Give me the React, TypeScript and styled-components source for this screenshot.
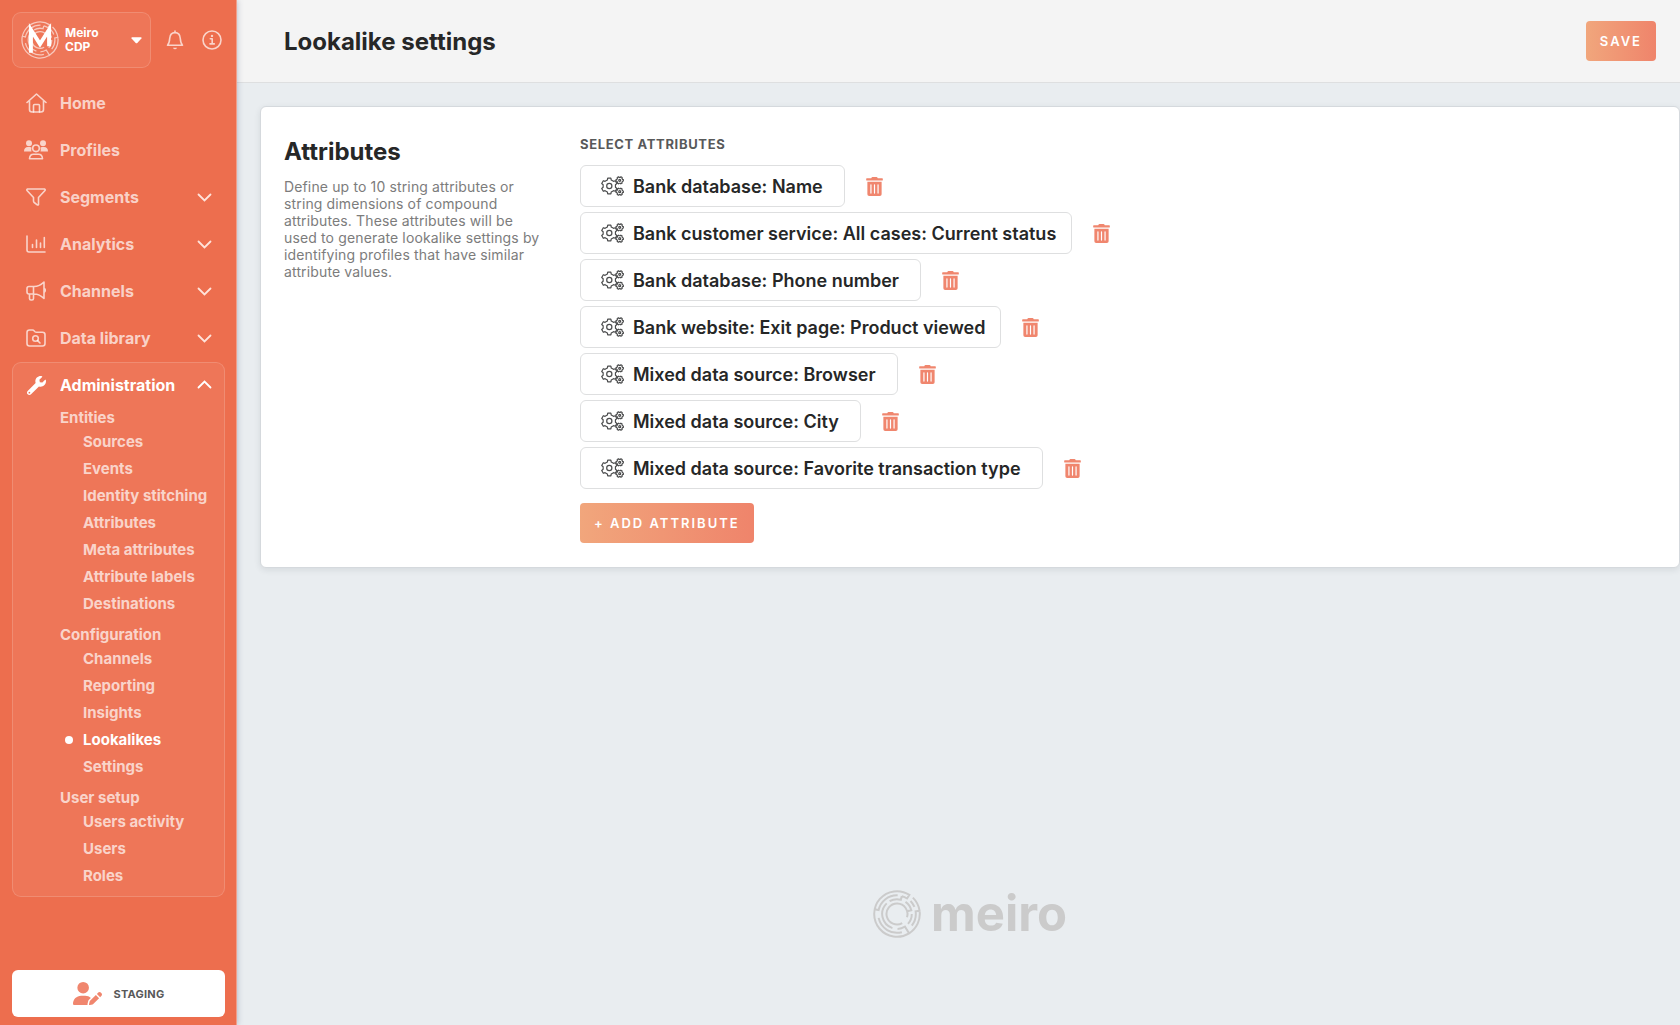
import React from "react";
import styled, { createGlobalStyle } from "styled-components";
import { FaTrashAlt, FaWrench } from "react-icons/fa";
import { FaUserPen } from "react-icons/fa6";

const color = {
  coral: "#ed6e4e",
  salmon: "#f0866e",
  peach: "#f1a67c",
  ink: "#262727",
  text: "#58595a",
  muted: "#7c7c7c",
  line: "#dedfe0",
  page: "#e9edf0",
  navText: "rgba(255, 255, 255, 0.7)",
  panel: "rgba(255, 255, 255, 0.06)",
  panelLine: "rgba(255, 255, 255, 0.16)",
};

const GlobalStyle = createGlobalStyle`
  *, *::before, *::after { box-sizing: border-box; }
  body {
    margin: 0;
    background: ${color.page};
    color: ${color.ink};
    font-family: Inter, "Liberation Sans", sans-serif;
    font-size: 16px;
  }
  h1, h2, h3, p, ul { margin: 0; padding: 0; }
  ul { list-style: none; }
  button { font-family: inherit; cursor: pointer; border: 0; background: none; padding: 0; }
  a { color: inherit; text-decoration: none; }
`;

const Shell = styled.div`
  display: grid;
  grid-template-columns: 237px minmax(0, 1fr);
  min-height: 100vh;
`;

/* ---------- sidebar ---------- */

const Sidebar = styled.aside`
  display: flex;
  flex-direction: column;
  padding: 12px 11px 8px 12px;
  background: ${color.coral};
  border-right: 1px solid #f0a08c;
  box-shadow: 0 0 6px rgba(60, 70, 110, 0.35);
  z-index: 1;
`;

const TopBar = styled.div`
  display: flex;
  align-items: center;
  padding-right: 3px;
`;

const Workspace = styled.button`
  display: flex;
  align-items: center;
  gap: 6px;
  width: 139px;
  height: 56px;
  padding: 0 8px;
  background: ${color.panel};
  border: 1px solid ${color.panelLine};
  border-radius: 9px;
  color: #fff;
`;

const WorkspaceName = styled.span`
  flex: 1;
  font-size: 12px;
  font-weight: 700;
  line-height: 14px;
  text-align: left;
`;

const TopActions = styled.div`
  display: flex;
  flex: 1;
  justify-content: space-between;
  padding-left: 15px;
`;

const IconButton = styled.button`
  display: flex;
  align-items: center;
  color: ${color.navText};
`;

const Nav = styled.nav`
  display: flex;
  flex-direction: column;
  padding-top: 11px;
`;

const NavItem = styled.a<{ $active?: boolean }>`
  display: flex;
  align-items: center;
  height: ${(p) => (p.$active ? 44 : 47)}px;
  padding: 0 13px 0 12px;
  color: ${(p) => (p.$active ? "#fff" : color.navText)};
  font-weight: 700;
`;

const NavIcon = styled.span`
  display: flex;
  justify-content: center;
  width: 24px;
  margin-right: 12px;
`;

const NavLabel = styled.span`
  flex: 1;
`;

const OpenSection = styled.section`
  border: 1px solid ${color.panelLine};
  border-radius: 9px;
  background: ${color.panel};
  margin-top: 1px;

  ${NavItem} {
    padding: 0 12px 0 11px;
  }
`;

const Group = styled.div`
  padding: 1px 8px 7px 47px;
`;

const GroupTitle = styled.h3`
  color: ${color.navText};
  font-size: 15px;
  font-weight: 700;
  line-height: 20px;
`;

const SubLink = styled.a<{ $active?: boolean }>`
  display: flex;
  align-items: center;
  height: 27px;
  color: ${(p) => (p.$active ? "#fff" : color.navText)};
  font-size: 15px;
  font-weight: 700;
  white-space: nowrap;

  &::before {
    content: "";
    width: 8px;
    height: 8px;
    margin: 0 10px 0 5px;
    border-radius: 50%;
    background: ${(p) => (p.$active ? "#fff" : "transparent")};
  }
`;

const Staging = styled.button`
  display: flex;
  align-items: center;
  justify-content: center;
  gap: 12px;
  height: 47px;
  margin-top: auto;
  border-radius: 6px;
  background: #fff;
  color: ${color.text};
  font-size: 11px;
  font-weight: 700;
  letter-spacing: 0.02em;

  svg {
    color: ${color.salmon};
  }
`;

/* ---------- main ---------- */

const Main = styled.main`
  display: flex;
  flex-direction: column;
`;

const Header = styled.header`
  display: flex;
  align-items: center;
  justify-content: space-between;
  height: 83px;
  padding: 0 24px 0 47px;
  background: #f4f4f4;
  border-bottom: 1px solid ${color.line};
`;

const Title = styled.h1`
  padding-top: 2px;
  font-size: 24px;
  font-weight: 700;
  line-height: 30px;
`;

const PrimaryButton = styled.button`
  height: 40px;
  padding: 0 14px;
  border-radius: 4px;
  background: linear-gradient(90deg, ${color.peach}, #ef846b);
  color: #fff;
  font-size: 13px;
  font-weight: 600;
  letter-spacing: 2px;
`;

const Content = styled.div`
  display: flex;
  flex: 1;
  flex-direction: column;
  padding: 23px 0 87px 23px;
`;

const Card = styled.section`
  display: grid;
  grid-template-columns: 264px minmax(0, 1fr);
  column-gap: 32px;
  padding: 28px 23px 24px;
  background: #fff;
  border: 1px solid #d5d9dd;
  border-radius: 6px;
  box-shadow: 0 2px 6px rgba(40, 50, 60, 0.1);
`;

const CardTitle = styled.h2`
  padding-top: 1px;
  font-size: 24px;
  font-weight: 700;
  line-height: 32px;
`;

const Description = styled.p`
  padding-top: 10px;
  color: ${color.muted};
  font-size: 14px;
  letter-spacing: 0.01em;
  line-height: 17px;
`;

const FieldTitle = styled.h3`
  color: ${color.text};
  font-size: 13px;
  font-weight: 700;
  letter-spacing: 0.05em;
  line-height: 18px;
`;

const AttributeList = styled.ul`
  display: flex;
  flex-direction: column;
  gap: 5px;
  padding: 12px 0 14px;
`;

const AttributeRow = styled.li`
  display: flex;
  align-items: center;
  gap: 20px;
`;

const Tag = styled.button<{ $compound?: boolean }>`
  display: flex;
  align-items: center;
  gap: 9px;
  height: 42px;
  padding: 0 ${(p) => (p.$compound ? 15 : 21)}px 0 20px;
  border: 1px solid ${color.line};
  border-radius: 6px;
  background: #fff;
  color: ${color.ink};
  font-size: 18px;
  font-weight: 600;
  white-space: nowrap;
`;

const Remove = styled.button`
  display: flex;
  color: ${color.salmon};
`;

const Brand = styled.div`
  display: flex;
  align-items: center;
  justify-content: center;
  gap: 10px;
  height: 48px;
  margin-top: auto;
  color: #cbcbcb;
`;

const BrandName = styled.span`
  font-size: 49px;
  font-weight: 700;
  line-height: 48px;
`;

/* ---------- drawings ---------- */

const polar = (r: number, deg: number) => {
  const a = ((deg - 90) * Math.PI) / 180;
  return `${(24 + r * Math.cos(a)).toFixed(2)} ${(24 + r * Math.sin(a)).toFixed(2)}`;
};

const arc = (r: number, from: number, to: number) =>
  `A${r} ${r} 0 ${Math.abs(to - from) > 180 ? 1 : 0} ${to > from ? 1 : 0} ${polar(r, to)}`;

/* Concentric maze walls, angles clockwise from twelve o'clock. */
const mazePath = [
  `M${polar(18.5, 15)}${arc(18.5, 15, 33)}L${polar(22.8, 33)}${arc(22.8, 33, -212)}L${polar(19, -212)}`,
  `M${polar(22.8, 44)}${arc(22.8, 44, 82)}L${polar(18.8, 82)}${arc(18.8, 82, 128)}`,
  `M${polar(22.8, 82)}${arc(22.8, 82, 148)}L${polar(15, 148)}${arc(15, 148, 178)}`,
  `M${polar(22.8, 282)}L${polar(18.8, 282)}${arc(18.8, 282, 362)}`,
  `M${polar(18.8, 258)}${arc(18.8, 258, 165)}`,
  `M${polar(18.8, 46)}${arc(18.8, 46, 68)}`,
  `M${polar(14.8, 330)}${arc(14.8, 330, 375)}L${polar(18.5, 15)}`,
  `M${polar(14.8, 316)}${arc(14.8, 316, 198)}`,
  `M${polar(14.8, 35)}${arc(14.8, 35, 75)}L${polar(10.5, 75)}`,
  `M${polar(14.8, 90)}${arc(14.8, 90, 132)}`,
  `M${polar(10.5, 150)}${arc(10.5, 150, 468)}`,
].join("");

const Maze = ({ size, width, letter }: { size: number; width: number; letter?: boolean }) => (
  <svg width={size} height={size} viewBox="0 0 48 48" fill="none" stroke="currentColor" aria-hidden>
    <path d={mazePath} strokeWidth={width} opacity={letter ? 0.6 : 1} />
    {letter && <path d="M12.500 40V11L24 29L35.500 11V32" strokeWidth="5" />}
  </svg>
);

const gear = (cx: number, cy: number, ri: number, ro: number, teeth: number, turn: number) => {
  const step = (Math.PI * 2) / teeth;
  const pts: string[] = [];
  for (let i = 0; i < teeth; i++) {
    const c = i * step + turn;
    [
      [ri, -0.3],
      [ro, -0.19],
      [ro, 0.19],
      [ri, 0.3],
    ].forEach(([r, k]) =>
      pts.push(`${(cx + r * Math.cos(c + k * step)).toFixed(2)} ${(cy + r * Math.sin(c + k * step)).toFixed(2)}`)
    );
  }
  return `M${pts.join("L")}Z`;
};

const GearsIcon = () => (
  <svg width="23" height="20" viewBox="0 0 23 20" fill="none" stroke="#4b4c4d" strokeWidth="1.200" strokeLinejoin="round" aria-hidden>
    <path d={gear(8.3, 10, 6.3, 8, 6, Math.PI / 6)} />
    <circle cx="8.300" cy="10" r="2.600" />
    <path d={gear(18.7, 4.3, 3, 3.7, 6, 0)} />
    <circle cx="18.700" cy="4.300" r="1" />
    <path d={gear(18.7, 15.7, 3, 3.7, 6, 0)} />
    <circle cx="18.700" cy="15.700" r="1" />
  </svg>
);

const Line = ({ children, w = 21, h = 20 }: { children: React.ReactNode; w?: number; h?: number }) => (
  <svg
    width={w}
    height={h}
    viewBox={`0 0 ${w} ${h}`}
    fill="none"
    stroke="currentColor"
    strokeWidth="1.600"
    strokeLinecap="round"
    strokeLinejoin="round"
    aria-hidden
  >
    {children}
  </svg>
);

const HomeIcon = () => (
  <Line>
    <path d="M1 9.500L10.500 1L20 9.500M3.500 7.500V16.500Q3.500 19 6 19H15Q17.500 19 17.500 16.500V7.500" />
    <path d="M7.500 19V12.500Q7.500 11.500 8.500 11.500H12.500Q13.500 11.500 13.500 12.500V19" />
  </Line>
);

const PeopleIcon = () => (
  <Line w={24} h={20}>
    <g fill="currentColor" stroke="none">
      <circle cx="5" cy="3.300" r="3" />
      <circle cx="19" cy="3.300" r="3" />
      <path d="M0 11.500Q0 7 4 7H6Q7 7 7.600 7.500Q7 9.500 7.500 11.500ZM24 11.500Q24 7 20 7H18Q17 7 16.400 7.500Q17 9.500 16.500 11.500Z" />
    </g>
    <circle cx="12" cy="8.300" r="3.300" />
    <path d="M5.500 18.800Q5.800 14.300 9.500 14.300H14.500Q18.200 14.300 18.500 18.800Z" />
  </Line>
);

const FunnelIcon = () => (
  <Line w={20} h={18}>
    <path d="M1.500 1H18.500Q19.500 1.500 19 2.500L12.500 9.500V16.500Q12 17.300 11.200 16.800L8.200 14.500Q7.500 14 7.500 13V9.500L1 2.500Q0.500 1.500 1.500 1Z" />
  </Line>
);

const ChartIcon = () => (
  <Line w={20} h={18}>
    <path d="M1 1V15Q1 17 3 17H19M6.500 9.500V12.500M10.500 5V12.500M14.500 8V12.500M18.300 2.500V12.500" />
  </Line>
);

const HornIcon = () => (
  <Line w={20} h={20}>
    <path d="M18 1V17.500C15 14.500 12 13 8 13H3Q1 13 1 11V7.500Q1 5.500 3 5.500H8C12 5.500 15 4 18 1ZM7.500 5.500V13M3.500 13V17.500Q3.500 19 5 19H6Q7.500 19 7.500 17.500V13M18.500 7.500Q20 9.200 18.500 11" />
  </Line>
);

const FolderIcon = () => (
  <Line w={20} h={18}>
    <path d="M1 14.500V3.500Q1 1 3.500 1H6.500Q7.500 1 8.300 2L9 2.800Q9.500 3.300 10.500 3.300H16.500Q19 3.300 19 5.800V14.500Q19 17 16.500 17H3.500Q1 17 1 14.500Z" />
    <circle cx="9.500" cy="9.500" r="2.800" />
    <path d="M11.600 11.600L14 14" />
  </Line>
);

const BellIcon = () => (
  <Line w={18} h={20}>
    <path d="M9 1V2.500M1.500 15.200H16.500C14.800 13.500 14.500 12 14.300 8.500C14.100 4.800 12 2.600 9 2.600C6 2.600 3.900 4.800 3.700 8.500C3.500 12 3.200 13.500 1.500 15.200Z" />
    <path d="M7 17.800H11Q10.500 19.300 9 19.300Q7.500 19.300 7 17.800Z" fill="currentColor" stroke="none" />
  </Line>
);

const InfoIcon = () => (
  <Line w={20} h={20}>
    <circle cx="10" cy="10" r="9" />
    <path d="M8.300 8.700H10.200V13.700M8 13.900H12.300" />
    <circle cx="10" cy="5.900" r="1.200" fill="currentColor" stroke="none" />
  </Line>
);

const Chevron = ({ up }: { up?: boolean }) => (
  <svg width="15" height="10" viewBox="0 0 15 10" fill="none" stroke={up ? "#fff" : "#ffe3da"} strokeWidth="1.800" strokeLinecap="round" aria-hidden>
    <path d={up ? "M1.500 7.500L7.500 1.500L13.500 7.500" : "M1.500 2.500L7.500 8.500L13.500 2.500"} />
  </svg>
);

const Caret = () => (
  <svg width="11" height="8" viewBox="0 0 11 8" fill="currentColor" aria-hidden>
    <path d="M1 1.300H10Q11 1.500 10.400 2.400L6.300 7Q5.500 7.700 4.700 7L0.600 2.400Q0 1.500 1 1.300Z" />
  </svg>
);

/* ---------- data ---------- */

const menu = [
  { label: "Home", icon: <HomeIcon /> },
  { label: "Profiles", icon: <PeopleIcon /> },
  { label: "Segments", icon: <FunnelIcon />, nested: true },
  { label: "Analytics", icon: <ChartIcon />, nested: true },
  { label: "Channels", icon: <HornIcon />, nested: true },
  { label: "Data library", icon: <FolderIcon />, nested: true },
];

const administration = [
  {
    title: "Entities",
    links: ["Sources", "Events", "Identity stitching", "Attributes", "Meta attributes", "Attribute labels", "Destinations"],
  },
  { title: "Configuration", links: ["Channels", "Reporting", "Insights", "Lookalikes", "Settings"] },
  { title: "User setup", links: ["Users activity", "Users", "Roles"] },
];

const attributes = [
  { name: "Bank database: Name" },
  { name: "Bank customer service: All cases: Current status", compound: true },
  { name: "Bank database: Phone number" },
  { name: "Bank website: Exit page: Product viewed", compound: true },
  { name: "Mixed data source: Browser" },
  { name: "Mixed data source: City" },
  { name: "Mixed data source: Favorite transaction type" },
];

export default function App() {
  return (
    <>
      <GlobalStyle />
      <Shell>
        <Sidebar>
          <TopBar>
            <Workspace type="button">
              <Maze size={38} width={1.6} letter />
              <WorkspaceName>
                Meiro
                <br />
                CDP
              </WorkspaceName>
              <Caret />
            </Workspace>
            <TopActions>
              <IconButton type="button" aria-label="Notifications">
                <BellIcon />
              </IconButton>
              <IconButton type="button" aria-label="Information">
                <InfoIcon />
              </IconButton>
            </TopActions>
          </TopBar>

          <Nav>
            {menu.map((item) => (
              <NavItem href="#" key={item.label}>
                <NavIcon>{item.icon}</NavIcon>
                <NavLabel>{item.label}</NavLabel>
                {item.nested && <Chevron />}
              </NavItem>
            ))}
            <OpenSection>
              <NavItem href="#" $active>
                <NavIcon>
                  <FaWrench size={19} />
                </NavIcon>
                <NavLabel>Administration</NavLabel>
                <Chevron up />
              </NavItem>
              {administration.map((group) => (
                <Group key={group.title}>
                  <GroupTitle>{group.title}</GroupTitle>
                  {group.links.map((link) => (
                    <SubLink href="#" key={link} $active={link === "Lookalikes"}>
                      {link}
                    </SubLink>
                  ))}
                </Group>
              ))}
            </OpenSection>
          </Nav>

          <Staging type="button">
            <FaUserPen size={29} />
            STAGING
          </Staging>
        </Sidebar>

        <Main>
          <Header>
            <Title>Lookalike settings</Title>
            <PrimaryButton type="button">SAVE</PrimaryButton>
          </Header>
          <Content>
            <Card>
              <div>
                <CardTitle>Attributes</CardTitle>
                <Description>
                  Define up to 10 string attributes or string dimensions of compound attributes. These attributes will
                  be used to generate lookalike settings by identifying profiles that have similar attribute values.
                </Description>
              </div>
              <div>
                <FieldTitle>SELECT ATTRIBUTES</FieldTitle>
                <AttributeList>
                  {attributes.map((attribute) => (
                    <AttributeRow key={attribute.name}>
                      <Tag type="button" $compound={attribute.compound}>
                        <GearsIcon />
                        {attribute.name}
                      </Tag>
                      <Remove type="button" aria-label={`Remove ${attribute.name}`}>
                        <FaTrashAlt size={19} />
                      </Remove>
                    </AttributeRow>
                  ))}
                </AttributeList>
                <PrimaryButton type="button">+ ADD ATTRIBUTE</PrimaryButton>
              </div>
            </Card>
            <Brand>
              <Maze size={48} width={2} />
              <BrandName>meiro</BrandName>
            </Brand>
          </Content>
        </Main>
      </Shell>
    </>
  );
}
